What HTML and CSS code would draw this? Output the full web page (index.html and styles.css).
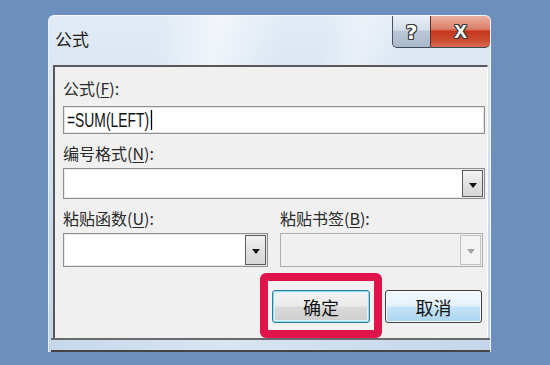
FILE: index.html
```html
<!DOCTYPE html>
<html lang="zh-CN">
<head>
<meta charset="utf-8">
<title>公式</title>
<link rel="stylesheet" href="styles.css">
</head>
<body>
<div class="window">
  <div class="titlebar">
    <span class="title">公式</span>
    <div class="controls">
      <div class="btn-help"><span class="glyph">?</span></div>
      <div class="btn-close"><span class="glyph">X</span></div>
    </div>
  </div>
  <div class="client">
    <div class="label">公式(<u>F</u>):</div>
    <div class="field formula">
      <span class="formula-text">=SUM(LEFT)<span class="caret"></span></span>
    </div>
    <div class="label gap9">编号格式(<u>N</u>):</div>
    <div class="combo combo-wide">
      <span class="drop"><span class="arrow"></span></span>
    </div>
    <div class="pair gap9">
      <div class="label">粘贴函数(<u>U</u>):</div>
      <div class="label">粘贴书签(<u>B</u>):</div>
    </div>
    <div class="pair pair-combos">
      <div class="combo combo-row"><span class="drop"><span class="arrow"></span></span></div>
      <div class="combo combo-row disabled"><span class="drop"><span class="arrow"></span></span></div>
    </div>
    <div class="buttons">
      <div class="highlight">
        <div class="btn btn-ok">确定</div>
      </div>
      <div class="btn btn-cancel">取消</div>
    </div>
  </div>
  <div class="bottom"></div>
</div>
</body>
</html>
```
FILE: styles.css
```css
html, body {
  margin: 0;
  padding: 0;
}
body {
  width: 550px;
  height: 365px;
  overflow: hidden;
  background: #6c8fbe;
  font-family: "Noto Sans CJK SC", "Noto Sans", sans-serif;
  color: #2a2a2a;
}
.window {
  margin: 15px 0 0 48px;
  width: 443px;
  height: 337px;
  box-sizing: border-box;
  display: flex;
  flex-direction: column;
  border-top: 1px solid #f3f7fb;
  border-left: 1px solid #eaf1f8;
  border-right: 1px solid #f4f7fa;
  border-radius: 6px 6px 0 0;
  background: linear-gradient(#e2ebf5, #cadbee 60%, #c3d6ec);
}
.titlebar {
  height: 49px;
  flex: none;
  display: flex;
  justify-content: space-between;
  align-items: flex-start;
  border-radius: 6px 6px 0 0;
  background: linear-gradient(100deg, rgba(255,255,255,0) 25%, rgba(255,255,255,0.55) 38%, rgba(255,255,255,0) 52%, rgba(255,255,255,0) 62%, rgba(255,255,255,0.35) 70%, rgba(255,255,255,0) 80%);
}
.title {
  margin: 11px 0 0 6px;
  font-size: 17px;
  line-height: 24px;
  color: #1c1c1c;
}
.controls {
  display: flex;
}
.btn-help, .btn-close {
  height: 32px;
  box-sizing: border-box;
  display: flex;
  align-items: center;
  justify-content: center;
  border-bottom: 1px solid #3f4754;
}
.btn-help {
  width: 38px;
  border-left: 1px solid #4a5260;
  border-radius: 0 0 0 5px;
  background: linear-gradient(#e8eef5 0%, #d4dde8 45%, #b9c6d6 50%, #a9b9cc 100%);
}
.btn-close {
  width: 60px;
  border-left: 1px solid #6b2a1e;
  border-radius: 0 5px 5px 0;
  background: linear-gradient(#eab0a2 0%, #dc8068 42%, #c5361c 50%, #cd4f33 80%, #d86e55 100%);
}
.glyph {
  color: #fff;
  font-weight: bold;
  line-height: 1;
  text-shadow: 1px 0 0 #3a3a3a, -1px 0 0 #3a3a3a, 0 1px 0 #3a3a3a, 0 -1px 0 #3a3a3a, 1px 1px 0 #3a3a3a, -1px -1px 0 #3a3a3a, 1px -1px 0 #3a3a3a, -1px 1px 0 #3a3a3a;
}
.btn-help .glyph {
  font-family: "DejaVu Sans", sans-serif;
  font-size: 20px;
  margin-top: 1px;
}
.btn-close .glyph {
  font-family: "Liberation Sans", sans-serif;
  font-size: 19px;
  margin-top: -1px;
}
.client {
  flex: none;
  height: 273px;
  margin: 0 2px 0 4px;
  box-sizing: border-box;
  padding: 11px 2px 0 8px;
  border-top: 2px solid #585858;
  border-left: 2px solid #585858;
  border-right: 1px solid #fbfbfb;
  background: #f0f0f0;
}
.label {
  height: 20px;
  line-height: 20px;
  font-size: 16px;
  white-space: nowrap;
}
.label u {
  text-decoration-thickness: 1px;
  text-underline-offset: 2px;
}
.gap9 {
  margin-top: 9px;
}
.field {
  margin-top: 8px;
  height: 28px;
  box-sizing: border-box;
  border: 1px solid #8e8e8e;
  box-shadow: inset 0 0 0 1px #e4e4e4;
  background: #fff;
  display: flex;
  align-items: center;
  padding-left: 3px;
}
.formula-text {
  display: inline-block;
  font-family: "Liberation Sans", sans-serif;
  font-size: 21px;
  line-height: 26px;
  color: #111;
  transform: scaleX(0.66);
  transform-origin: left center;
  white-space: nowrap;
}
.caret {
  display: inline-block;
  width: 2px;
  height: 20px;
  margin-left: 3px;
  background: #000;
  vertical-align: -3px;
}
.combo {
  box-sizing: border-box;
  border: 1px solid #8e8e8e;
  box-shadow: inset 0 0 0 1px #e8e8e8;
  background: #fff;
  display: flex;
  justify-content: flex-end;
}
.combo-wide {
  margin-top: 5px;
  height: 31px;
}
.drop {
  width: 21px;
  margin: 1px;
  box-sizing: border-box;
  border: 1px solid #5c5c5c;
  background: linear-gradient(#f4f4f4, #e2e2e2 50%, #d6d6d6);
  display: flex;
  align-items: center;
  justify-content: center;
}
.arrow {
  width: 0;
  height: 0;
  margin-top: 3px;
  border-left: 4px solid transparent;
  border-right: 4px solid transparent;
  border-top: 5px solid #111;
}
.pair {
  display: grid;
  grid-template-columns: 205px 203px;
  column-gap: 12px;
}
.pair-combos {
  margin-top: 5px;
}
.combo-row {
  height: 34px;
}
.combo.disabled {
  background: #f0f0f0;
  border-color: #acacac;
  box-shadow: none;
}
.combo.disabled .drop {
  border-color: #c2c2c2;
  background: #f3f3f3;
}
.combo.disabled .arrow {
  border-top-color: #a3a3a3;
}
.buttons {
  margin-top: 6px;
  display: flex;
  justify-content: flex-end;
  align-items: flex-start;
  column-gap: 3px;
  padding-right: 3px;
}
.highlight {
  border: 8px solid #e0134b;
  border-radius: 6px;
  padding: 9px 4px 7px 4px;
  background: #f2f2f2;
}
.btn {
  height: 33px;
  box-sizing: border-box;
  border-radius: 3px;
  display: flex;
  align-items: center;
  justify-content: center;
  font-size: 18px;
  color: #141414;
}
.btn-ok {
  width: 98px;
  border: 1px solid #2f7d9c;
  box-shadow: inset 0 0 0 1px #8fdcef, inset 0 0 0 2px #dff4fa;
  background: linear-gradient(#f3f3f3 0%, #ebebeb 48%, #dadada 52%, #cdcdcd 100%);
}
.btn-cancel {
  width: 97px;
  margin-top: 17px;
  border: 1px solid #3b4046;
  box-shadow: inset 0 0 0 1px #f6fbff;
  background: linear-gradient(#f5fafd 0%, #e4f1fb 48%, #c6e3f7 52%, #abd6f2 100%);
}
.bottom {
  flex: 1;
  box-sizing: border-box;
  margin: 0 0 0 2px;
  border-top: 2px solid #6a6a6a;
  border-bottom: 2px solid #454545;
  background: linear-gradient(90deg, #c7d8ec, #d8e5f2 40%, #c4d6eb);
}
```
